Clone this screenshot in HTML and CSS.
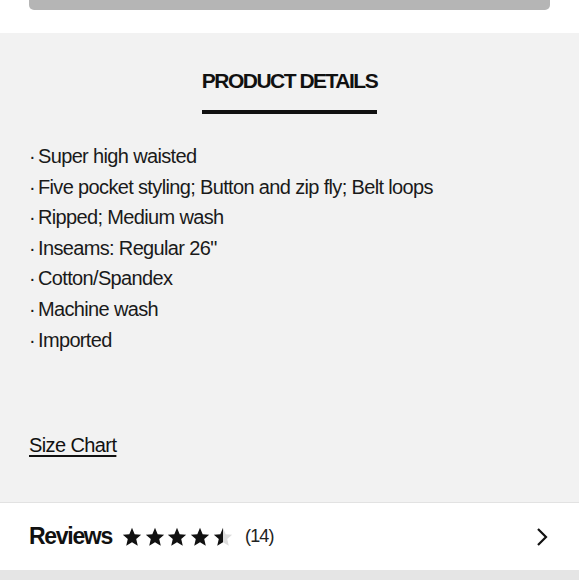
FILE: index.html
```html
<!DOCTYPE html>
<html>
<head>
<meta charset="utf-8">
<link rel="stylesheet" href="styles.css">
</head>
<body>
<div class="top">
  <div class="top-btn"></div>
</div>
<section class="details">
  <div class="tab">
    <h2 class="tab-title">PRODUCT DETAILS</h2>
  </div>
  <ul class="list">
    <li><span class="dot">·</span>Super high waisted</li>
    <li><span class="dot">·</span>Five pocket styling; Button and zip fly; Belt loops</li>
    <li><span class="dot">·</span>Ripped; Medium wash</li>
    <li><span class="dot">·</span>Inseams: Regular 26"</li>
    <li><span class="dot">·</span>Cotton/Spandex</li>
    <li><span class="dot">·</span>Machine wash</li>
    <li><span class="dot">·</span>Imported</li>
  </ul>
  <a class="size-chart">Size Chart</a>
</section>
<section class="reviews">
  <div class="reviews-left">
    <span class="reviews-title">Reviews</span>
    <span class="stars">
      <svg class="star" viewBox="0 0 24 24"><path d="M12 2l2.9 6.9 7.1.6-5.4 4.7 1.7 7.3L12 17.7 5.7 21.5l1.7-7.3L2 9.5l7.1-.6z" fill="#111"/></svg>
      <svg class="star" viewBox="0 0 24 24"><path d="M12 2l2.9 6.9 7.1.6-5.4 4.7 1.7 7.3L12 17.7 5.7 21.5l1.7-7.3L2 9.5l7.1-.6z" fill="#111"/></svg>
      <svg class="star" viewBox="0 0 24 24"><path d="M12 2l2.9 6.9 7.1.6-5.4 4.7 1.7 7.3L12 17.7 5.7 21.5l1.7-7.3L2 9.5l7.1-.6z" fill="#111"/></svg>
      <svg class="star" viewBox="0 0 24 24"><path d="M12 2l2.9 6.9 7.1.6-5.4 4.7 1.7 7.3L12 17.7 5.7 21.5l1.7-7.3L2 9.5l7.1-.6z" fill="#111"/></svg>
      <svg class="star" viewBox="0 0 24 24"><defs><linearGradient id="half"><stop offset="50%" stop-color="#111"/><stop offset="50%" stop-color="#dcdcdc"/></linearGradient></defs><path d="M12 2l2.9 6.9 7.1.6-5.4 4.7 1.7 7.3L12 17.7 5.7 21.5l1.7-7.3L2 9.5l7.1-.6z" fill="url(#half)"/></svg>
    </span>
    <span class="count">(14)</span>
  </div>
  <svg class="chevron" viewBox="0 0 14 20"><path d="M3 2l8 8-8 8" fill="none" stroke="#111" stroke-width="2.2"/></svg>
</section>
<div class="bottom"></div>
</body>
</html>
```

FILE: styles.css
```css
html, body {
  margin: 0;
  padding: 0;
  background: #fff;
  font-family: "Liberation Sans", Arial, sans-serif;
  color: #1a1a1a;
}
.top {
  height: 33px;
  background: #fff;
  padding: 0 29px;
}
.top-btn {
  height: 10px;
  background: #b5b5b5;
  border-radius: 0 0 5px 5px;
}
.details {
  background: #f2f2f2;
  height: 469px;
  padding: 0 29px;
  box-sizing: border-box;
  display: flex;
  flex-direction: column;
}
.tab {
  display: flex;
  justify-content: center;
  padding-top: 36px;
}
.tab-title {
  margin: 0;
  font-size: 21px;
  font-weight: 700;
  letter-spacing: -1.5px;
  line-height: 24px;
  padding-bottom: 17px;
  border-bottom: 4px solid #111;
  color: #111;
}
.list {
  list-style: none;
  margin: 27px 0 0;
  padding: 0;
  font-size: 20px;
  letter-spacing: -0.65px;
  line-height: 30.6px;
}
.dot {
  display: inline-block;
  width: 9px;
}
.size-chart {
  margin-top: 78px;
  align-self: flex-start;
  font-size: 20px;
  letter-spacing: -0.6px;
  text-decoration: underline;
  text-underline-offset: 3px;
  line-height: 24px;
  color: #111;
}
.reviews {
  border-top: 1px solid #e2e2e2;
  height: 68px;
  box-sizing: border-box;
  display: flex;
  align-items: center;
  justify-content: space-between;
  padding: 0 30px 0 29px;
}
.reviews-left {
  display: flex;
  align-items: center;
}
.reviews-title {
  font-size: 23px;
  font-weight: 700;
  letter-spacing: -1.3px;
  color: #111;
}
.stars {
  display: flex;
  margin-left: 9px;
  gap: 0.75px;
}
.star {
  width: 22px;
  height: 22px;
}
.count {
  margin-left: 11px;
  font-size: 18px;
  letter-spacing: -0.8px;
  color: #222;
}
.chevron {
  width: 14px;
  height: 20px;
}
.bottom {
  height: 10px;
  background: #e5e5e5;
}
```
